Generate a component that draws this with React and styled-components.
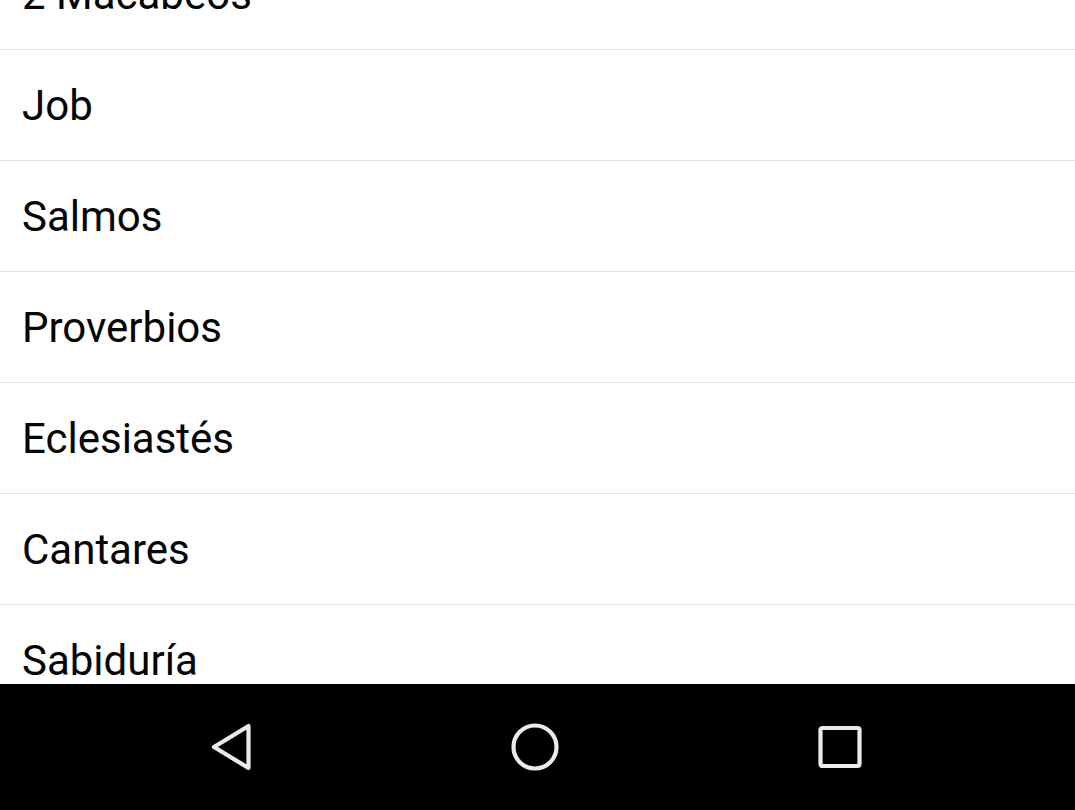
import React from 'react';
import styled, { createGlobalStyle } from 'styled-components';

const GlobalStyle = createGlobalStyle`
  html, body {
    margin: 0;
    padding: 0;
    background: #ffffff;
  }
  body {
    font-family: Roboto, "Noto Sans", "Liberation Sans", sans-serif;
  }
`

const Screen = styled.div`
  display: flex;
  flex-direction: column;
  height: 810px;
  width: 1075px;
  overflow: hidden;
`

const ListArea = styled.div`
  flex: 1;
  overflow: hidden;
  background: #ffffff;
`

const BookList = styled.ul`
  list-style: none;
  margin: -61px 0 0 0;
  padding: 0;
`

const BookRow = styled.li`
  height: 110px;
  display: flex;
  align-items: center;
  padding-left: 22px;
  border-bottom: 1px solid #e2e2e2;
  font-size: 42px;
  color: #050505;
`

const NavBar = styled.div`
  height: 126px;
  flex-shrink: 0;
  background: #000000;
  display: flex;
  align-items: center;
  justify-content: center;
  padding-right: 6px;
`

const NavButton = styled.div`
  width: 304px;
  display: flex;
  justify-content: center;
  align-items: center;
  height: 100%;
`

const books = ['2 Macabeos', 'Job', 'Salmos', 'Proverbios', 'Eclesiastés', 'Cantares', 'Sabiduría'];

const BackIcon = () => (
  <svg width="48" height="52" viewBox="0 0 48 52">
    <path d="M41.5 5 L41.5 47 L7 26 Z" fill="none" stroke="#ebebeb" strokeWidth="4.2" strokeLinejoin="round" />
  </svg>
);

const HomeIcon = () => (
  <svg width="52" height="52" viewBox="0 0 52 52">
    <circle cx="26" cy="26" r="21.5" fill="none" stroke="#ebebeb" strokeWidth="4.2" />
  </svg>
);

const RecentIcon = () => (
  <svg width="48" height="48" viewBox="0 0 48 48">
    <rect x="5.5" y="5" width="39" height="38" rx="2" fill="none" stroke="#ebebeb" strokeWidth="4.2" />
  </svg>
);

export default function App() {
  return (
    <>
      <GlobalStyle />
      <Screen>
        <ListArea>
          <BookList>
            {books.map((b) => <BookRow key={b}>{b}</BookRow>)}
          </BookList>
        </ListArea>
        <NavBar>
          <NavButton><BackIcon /></NavButton>
          <NavButton><HomeIcon /></NavButton>
          <NavButton><RecentIcon /></NavButton>
        </NavBar>
      </Screen>
    </>
  );
}
